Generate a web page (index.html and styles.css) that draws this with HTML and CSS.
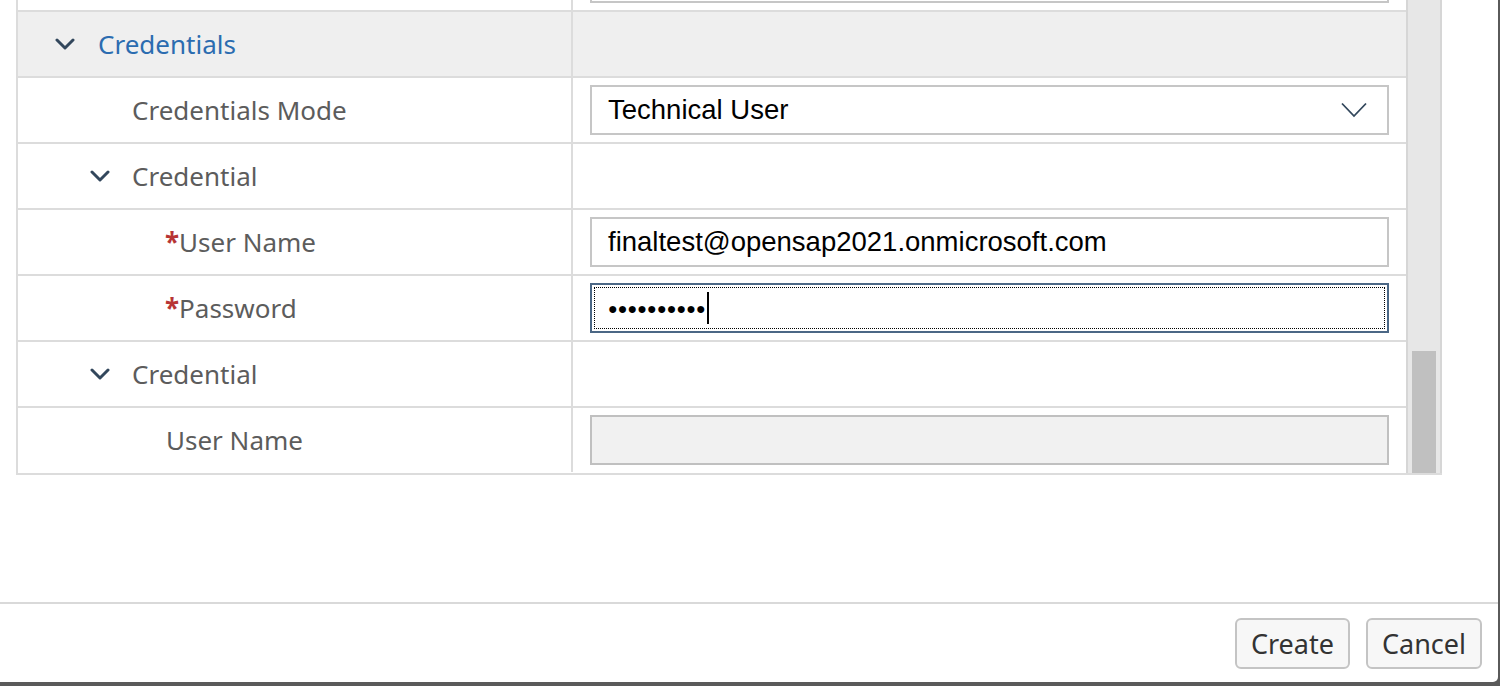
FILE: index.html
```html
<!DOCTYPE html>
<html>
<head>
<meta charset="utf-8">
<link rel="stylesheet" href="styles.css">
</head>
<body>
<div class="dialog">
  <div class="content">
    <div class="viewport">
      <div class="tree">
        <div class="row">
          <div class="label-cell"></div>
          <div class="value-cell"><div class="field"></div></div>
        </div>
        <div class="row group">
          <div class="label-cell lvl0">
            <svg class="chev" viewBox="0 0 20 12" width="20" height="12"><polyline points="2,2 10,10 18,2"/></svg>
            <span class="group-title">Credentials</span>
          </div>
          <div class="value-cell"></div>
        </div>
        <div class="row">
          <div class="label-cell lvl1">Credentials Mode</div>
          <div class="value-cell">
            <div class="field select"><span>Technical User</span>
              <svg class="sel-chev" viewBox="0 0 26 16" width="26" height="16"><polyline points="1,1.5 13,14 25,1.5"/></svg>
            </div>
          </div>
        </div>
        <div class="row">
          <div class="label-cell lvl1g">
            <svg class="chev" viewBox="0 0 20 12" width="20" height="12"><polyline points="2,2 10,10 18,2"/></svg>
            <span>Credential</span>
          </div>
          <div class="value-cell"></div>
        </div>
        <div class="row">
          <div class="label-cell lvl2"><span class="req">*</span>User Name</div>
          <div class="value-cell"><div class="field"><span>finaltest@opensap2021.onmicrosoft.com</span></div></div>
        </div>
        <div class="row">
          <div class="label-cell lvl2"><span class="req">*</span>Password</div>
          <div class="value-cell"><div class="field focused"><span class="dots">●●●●●●●●●●</span><span class="caret"></span></div></div>
        </div>
        <div class="row">
          <div class="label-cell lvl1g">
            <svg class="chev" viewBox="0 0 20 12" width="20" height="12"><polyline points="2,2 10,10 18,2"/></svg>
            <span>Credential</span>
          </div>
          <div class="value-cell"></div>
        </div>
        <div class="row">
          <div class="label-cell lvl2b">User Name</div>
          <div class="value-cell"><div class="field disabled"></div></div>
        </div>
      </div>
      <div class="scrollbar"><div class="thumb"></div></div>
    </div>
  </div>
  <div class="footer">
    <button class="btn">Create</button>
    <button class="btn">Cancel</button>
  </div>
</div>
</body>
</html>
```

FILE: styles.css
```css
* { box-sizing: border-box; }
html, body { margin: 0; padding: 0; }
body {
  width: 1500px;
  height: 686px;
  background: #5a5a5a;
  overflow: hidden;
  font-family: "Noto Sans", "Liberation Sans", sans-serif;
}
.dialog {
  width: 1498px;
  height: 682px;
  background: #ffffff;
  border-bottom-right-radius: 5px;
  display: flex;
  flex-direction: column;
}
.content {
  height: 602px;
  padding-left: 16px;
}
.viewport {
  width: 1426px;
  height: 475px;
  display: flex;
  border-left: 2px solid #dcdcdc;
  border-bottom: 2px solid #dcdcdc;
  overflow: hidden;
}
.tree {
  width: 1388px;
  margin-top: -56px;
  display: flex;
  flex-direction: column;
}
.row {
  display: flex;
  height: 66px;
  flex-shrink: 0;
  border-top: 2px solid #dcdcdc;
}
.row.group { background: #efefef; }
.label-cell {
  width: 555px;
  border-right: 2px solid #dcdcdc;
  display: flex;
  align-items: center;
  font-size: 26px;
  color: #5c5c5c;
  white-space: nowrap;
}
.value-cell {
  width: 833px;
  padding: 0 17px;
  display: flex;
  align-items: center;
}
.lvl0 { padding-left: 37px; gap: 23px; }
.lvl1 { padding-left: 114px; }
.lvl1g { padding-left: 72px; gap: 22px; }
.lvl2 { padding-left: 147px; }
.lvl2b { padding-left: 148px; }
.group-title { color: #2b6cb0; }
.req { color: #b73535; font-weight: bold; }
.chev { fill: none; stroke: #32475c; stroke-width: 3; stroke-linecap: round; stroke-linejoin: round; flex-shrink: 0; }
.field {
  width: 100%;
  height: 50px;
  border: 2px solid #c6c6c6;
  background: #ffffff;
  display: flex;
  align-items: center;
  padding-left: 16px;
  padding-right: 20px;
  font-family: "Liberation Sans", Arial, sans-serif;
  font-size: 27.5px;
  color: #000000;
}
.select { justify-content: space-between; }
.sel-chev { fill: none; stroke: #32475c; stroke-width: 1.8; }
.focused {
  border-color: #4b6785;
  outline: 1px dotted #000;
  outline-offset: -5px;
}
.dots { font-size: 16.2px; letter-spacing: 0px; }
.caret {
  width: 2px;
  height: 32px;
  background: #000;
  margin-left: 1px;
}
.disabled { background: #f1f1f1; border-color: #c0c0c0; }
.scrollbar {
  width: 36px;
  border-left: 2px solid #d6d6d6;
  border-right: 2px solid #d6d6d6;
  background: #e7e7e7;
  display: flex;
  flex-direction: column;
  justify-content: flex-end;
  padding: 0 4px;
}
.thumb { height: 122px; background: #c0c0c0; }
.footer {
  flex: 1;
  border-top: 2px solid #d9d9d9;
  display: flex;
  justify-content: flex-end;
  align-items: center;
  gap: 16px;
  padding-right: 16px;
}
.btn {
  height: 51px;
  padding: 0 14px;
  border: 2px solid #c4c4c4;
  border-radius: 6px;
  background: #f7f7f7;
  font-family: "Noto Sans", sans-serif;
  font-size: 27px;
  color: #333333;
}
```
